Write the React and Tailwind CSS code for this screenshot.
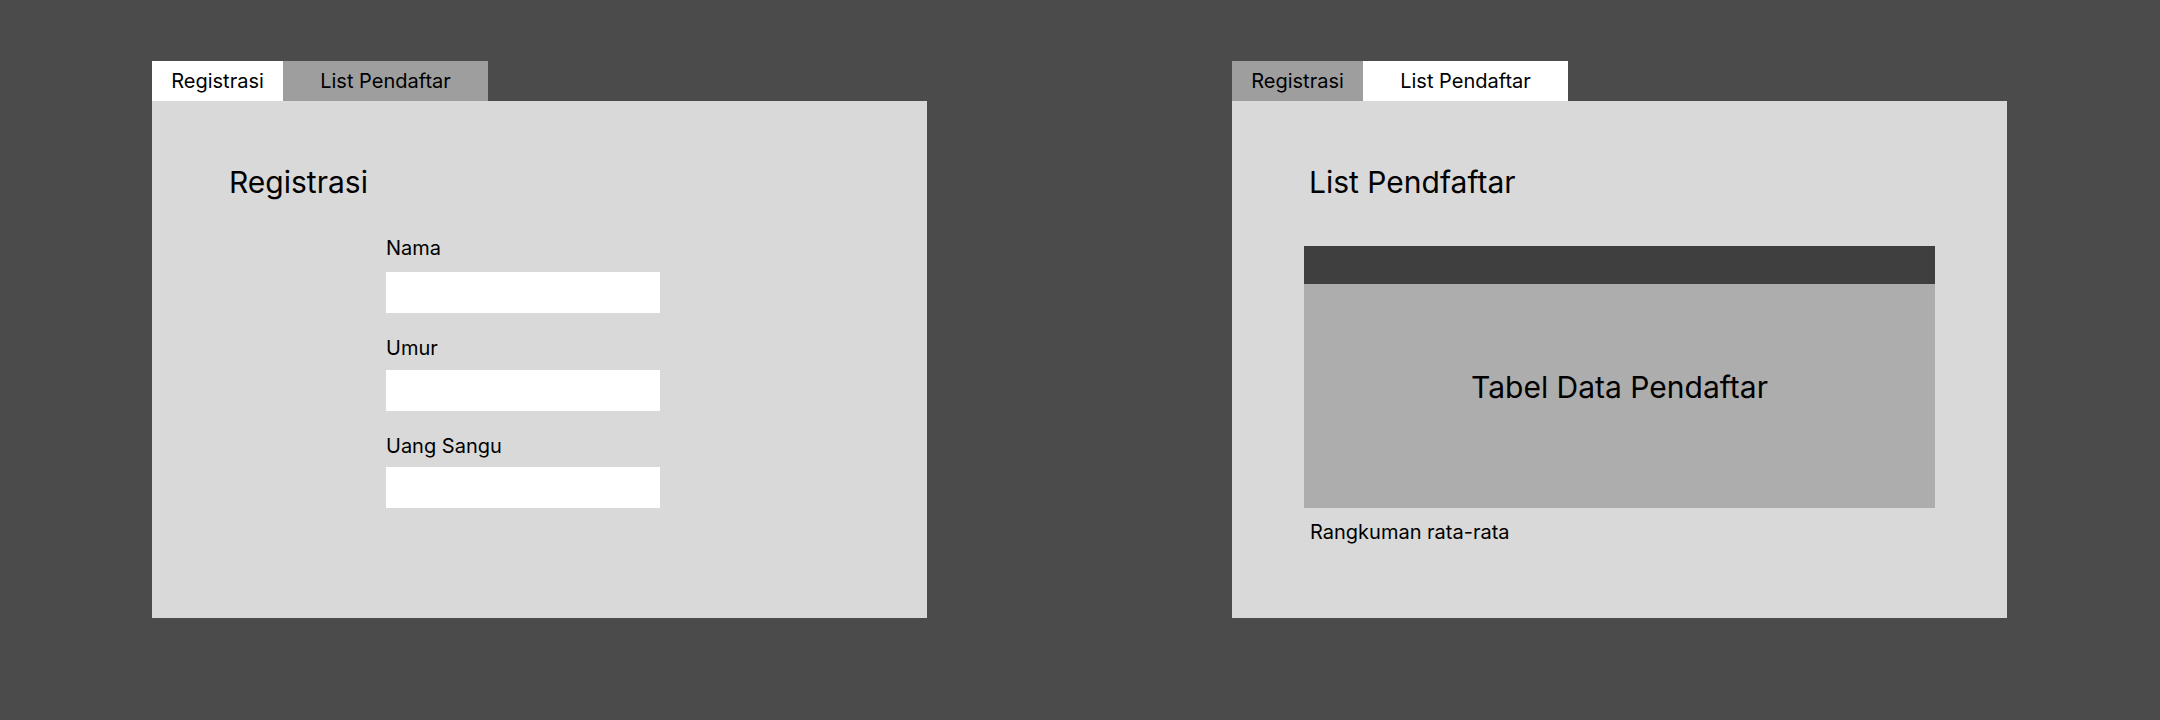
const tabs = ["Registrasi", "List Pendaftar"];

const TabBar = ({ active }) => (
  <div className="flex h-10">
    {tabs.map((label, i) => (
      <div
        key={label}
        className={`flex items-center justify-center text-xl leading-7 text-black ${
          i === 0 ? "w-[131px]" : "w-[205px]"
        } ${active === i ? "bg-white" : "bg-[#9e9e9e]"}`}
      >
        {label}
      </div>
    ))}
  </div>
);

const Field = ({ label, className, labelGap }) => (
  <div className={className}>
    <label className={`block text-xl leading-7 text-black ${labelGap}`}>
      {label}
    </label>
    <input type="text" className="block w-[274px] h-[41px] bg-white outline-none" />
  </div>
);

const RegistrasiPanel = () => (
  <div className="flex flex-col w-[775px]">
    <TabBar active={0} />
    <div className="h-[517px] bg-[#d9d9d9] pt-[63px] pl-[77px]">
      <h2 className="text-[30px] leading-9 text-black">Registrasi</h2>
      <div className="ml-[157px] w-[274px]">
        <Field label="Nama" className="mt-[34px]" labelGap="mb-[10px]" />
        <Field label="Umur" className="mt-[21px]" labelGap="mb-[8px]" />
        <Field label="Uang Sangu" className="mt-[21px]" labelGap="mb-[7px]" />
      </div>
    </div>
  </div>
);

const ListPanel = () => (
  <div className="flex flex-col w-[775px]">
    <TabBar active={1} />
    <div className="h-[517px] bg-[#d9d9d9] pt-[63px]">
      <h2 className="pl-[77px] text-[30px] leading-9 text-black">List Pendfaftar</h2>
      {/* Tabel */}
      <div className="mx-[72px] mt-[46px]">
        <div className="h-[38px] bg-[#3f3f3f]" />
        <div className="h-[224px] bg-[#adadad] pt-[85px] text-center text-[30px] leading-9 text-black">
          Tabel Data Pendaftar
        </div>
      </div>
      <p className="mt-[10px] pl-[78px] text-xl leading-7 text-black">Rangkuman rata-rata</p>
    </div>
  </div>
);

export default function App() {
  return (
    <div className="w-full h-[720px] bg-[#4b4b4b] flex gap-[305px] pt-[61px] pl-[152px] font-['Inter','Noto_Sans',sans-serif]">
      <RegistrasiPanel />
      <ListPanel />
    </div>
  );
}
